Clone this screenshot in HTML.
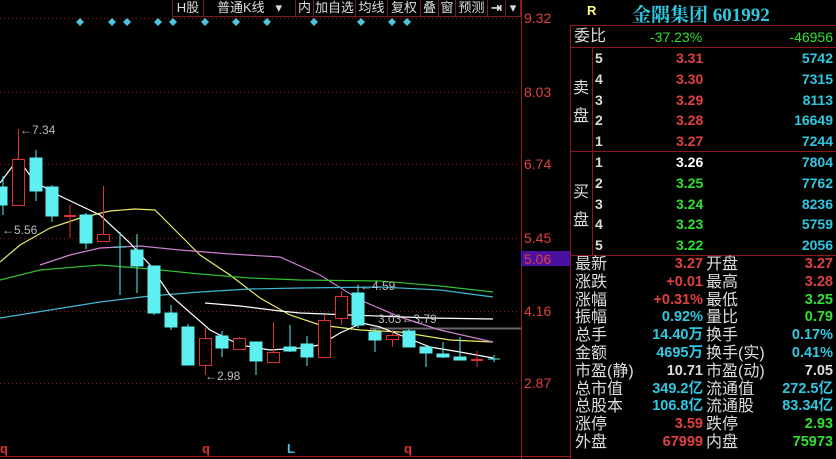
<!DOCTYPE html>
<html><head><meta charset="utf-8"><style>
*{margin:0;padding:0;box-sizing:border-box}
body{width:836px;height:459px;background:#000;overflow:hidden;position:relative;font-family:"Liberation Sans","Noto Sans CJK SC",sans-serif;}
.a{position:absolute;white-space:nowrap}
.tb{position:absolute;top:0;height:17px;border:1px solid #7a1a1a;border-top:none;color:#ddd;font-size:13px;line-height:16px;text-align:center}
.r{position:absolute;font-size:14px;line-height:18px;font-weight:bold;white-space:nowrap}
.lb{position:absolute;font-size:16px;color:#ddd;line-height:18px;white-space:nowrap}
</style></head><body>
<svg class="a" style="left:0;top:0" width="836" height="459">
<g stroke="#8a1a1a" stroke-dasharray="1,3" stroke-width="1">
<line x1="0" y1="18.5" x2="520" y2="18.5"/><line x1="0" y1="92.5" x2="520" y2="92.5"/><line x1="0" y1="164.5" x2="520" y2="164.5"/><line x1="0" y1="238.5" x2="520" y2="238.5"/><line x1="0" y1="311.5" x2="520" y2="311.5"/><line x1="0" y1="383.5" x2="520" y2="383.5"/>
</g>
<line x1="521.5" y1="0" x2="521.5" y2="459" stroke="#a01818"/>
<line x1="0" y1="456.5" x2="570" y2="456.5" stroke="#a01818"/>
<line x1="370" y1="328.5" x2="521" y2="328.5" stroke="#666" stroke-width="2"/>
<rect x="521" y="251" width="49" height="15" fill="#4a10a0"/>
<g fill="#4fc3e0">
<polygon points="80,18 84,22 80,26 76,22"/><polygon points="112,18 116,22 112,26 108,22"/><polygon points="127,18 131,22 127,26 123,22"/><polygon points="158,18 162,22 158,26 154,22"/><polygon points="173,18 177,22 173,26 169,22"/><polygon points="205,18 209,22 205,26 201,22"/><polygon points="236,18 240,22 236,26 232,22"/><polygon points="267,18 271,22 267,26 263,22"/><polygon points="314,18 318,22 314,26 310,22"/><polygon points="361,18 365,22 361,26 357,22"/><polygon points="392,18 396,22 392,26 388,22"/><polygon points="407,18 411,22 407,26 403,22"/>
</g>
<g fill="none" stroke-width="1.2">
<polyline stroke="#e8e86a" points="0,262 20,245 50,228 80,218 110,211 135,209 155,210 175,230 200,255 230,275 260,298 290,315 320,325 360,330 400,332 450,340 493,342"/>
<polyline stroke="#d080d0" points="40,265 70,255 100,248 140,246 180,250 230,254 280,257 320,275 360,300 400,317 440,330 493,342"/>
<polyline stroke="#30c030" points="0,280 40,270 100,265 150,269 200,274 250,278 300,280 380,281 440,286 493,292"/>
<polyline stroke="#40b8d0" points="0,318 50,310 100,302 150,296 200,292 250,289 300,288 380,287 440,290 493,297"/>
<polyline stroke="#fff" points="0,183 18,159 35,182 60,196 100,215 130,243 150,265 170,295 210,330 240,345 270,350 300,348 320,345 340,333 362,323 380,327 400,335 430,347 460,352 493,358"/>
<polyline stroke="#fff" points="205,303 240,306 280,311 300,313 350,315 430,318 493,319"/>
</g>
<g stroke="#5ef0f0" fill="#5ef0f0">
<line x1="3" y1="176" x2="3" y2="215"/><rect x="0" y="187" width="7" height="18"/>
<line x1="36" y1="150" x2="36" y2="201"/><rect x="30" y="158" width="12" height="33"/>
<line x1="52" y1="185" x2="52" y2="222"/><rect x="46" y="187" width="12" height="29"/>
<line x1="86" y1="213" x2="86" y2="249"/><rect x="80" y="215" width="12" height="28"/>
<line x1="120" y1="232" x2="120" y2="295"/><line x1="114" y1="247" x2="126" y2="247"/>
<line x1="137" y1="234" x2="137" y2="293"/><rect x="131" y="250" width="12" height="16"/>
<line x1="154" y1="266" x2="154" y2="315"/><rect x="148" y="266" width="12" height="47"/>
<line x1="171" y1="305" x2="171" y2="330"/><rect x="165" y="313" width="12" height="14"/>
<line x1="188" y1="324" x2="188" y2="365"/><rect x="182" y="327" width="12" height="38"/>
<line x1="222" y1="331" x2="222" y2="357"/><rect x="216" y="336" width="12" height="12"/>
<line x1="256" y1="342" x2="256" y2="375"/><rect x="250" y="342" width="12" height="19"/>
<line x1="290" y1="325" x2="290" y2="352"/><rect x="284" y="347" width="12" height="4"/>
<line x1="307" y1="336" x2="307" y2="366"/><rect x="301" y="344" width="12" height="13"/>
<line x1="358" y1="285" x2="358" y2="328"/><rect x="352" y="293" width="12" height="32"/>
<line x1="375" y1="329" x2="375" y2="352"/><rect x="369" y="332" width="12" height="8"/>
<line x1="409" y1="329" x2="409" y2="347"/><rect x="403" y="331" width="12" height="16"/>
<line x1="426" y1="347" x2="426" y2="367"/><rect x="420" y="347" width="12" height="6"/>
<line x1="443" y1="342" x2="443" y2="358"/><rect x="437" y="354" width="12" height="3"/>
<line x1="460" y1="337" x2="460" y2="360"/><rect x="454" y="357" width="12" height="3"/>
<line x1="494" y1="355" x2="494" y2="362"/><line x1="488" y1="359" x2="500" y2="359"/>
</g>
<g stroke="#e03030" fill="#000">
<line x1="18.5" y1="129" x2="18.5" y2="159"/><rect x="12.5" y="159.5" width="12" height="46"/>
<line x1="70" y1="205" x2="70" y2="238"/><line x1="64" y1="216" x2="76" y2="216" stroke-width="2"/>
<line x1="103.5" y1="186" x2="103.5" y2="234"/><rect x="97.5" y="234.5" width="12" height="7"/>
<line x1="205.5" y1="328" x2="205.5" y2="375"/><rect x="199.5" y="338.5" width="12" height="27"/>
<line x1="239.5" y1="337" x2="239.5" y2="350"/><rect x="233.5" y="338.5" width="12" height="11"/>
<line x1="273.5" y1="322" x2="273.5" y2="352"/><rect x="267.5" y="352.5" width="12" height="10"/>
<line x1="324.5" y1="315" x2="324.5" y2="320"/><rect x="318.5" y="320.5" width="12" height="37"/>
<line x1="341.5" y1="291" x2="341.5" y2="325"/><rect x="335.5" y="296.5" width="12" height="22"/>
<line x1="392.5" y1="330" x2="392.5" y2="347"/><rect x="386.5" y="335.5" width="12" height="4"/>
<line x1="477" y1="351" x2="477" y2="367"/><line x1="471" y1="360" x2="483" y2="360" stroke-width="2"/>
</g>
<g fill="#bbb" font-size="12" font-family="Liberation Sans">
<text x="20" y="134">←7.34</text><text x="2" y="234">←5.56</text><text x="205" y="380">←2.98</text><text x="360" y="290">←4.59</text><text x="378" y="323">3.03←3.79</text>
</g>
<g fill="#e04040" font-size="14" font-family="Liberation Sans">
<text x="524" y="23">9.32</text><text x="524" y="97">8.03</text><text x="524" y="169">6.74</text><text x="524" y="243">5.45</text><text x="524" y="264">5.06</text><text x="524" y="316">4.16</text><text x="524" y="388">2.87</text>
</g>
<g font-size="13" font-weight="bold" font-family="Liberation Sans"><text x="0" y="453" fill="#e03030">q</text><text x="202" y="453" fill="#e03030">q</text><text x="287" y="453" fill="#40c0d0">L</text><text x="404" y="453" fill="#e03030">q</text></g>
<g stroke="#8a1a1a" fill="none">
<line x1="570.5" y1="26" x2="570.5" y2="459"/><line x1="570" y1="25.5" x2="836" y2="25.5"/><line x1="570" y1="47.5" x2="836" y2="47.5"/><line x1="570" y1="151.5" x2="836" y2="151.5"/><line x1="570" y1="255.5" x2="836" y2="255.5"/><line x1="592.5" y1="47" x2="592.5" y2="255"/>
</g>
</svg>
<div class="tb" style="left:172px;width:32px">H股</div>
<div class="tb" style="left:203px;width:93px">普通K线 &nbsp;&nbsp;▾</div>
<div class="tb" style="left:295px;width:19px">内</div>
<div class="tb" style="left:313px;width:43px">加自选</div>
<div class="tb" style="left:355px;width:33px">均线</div>
<div class="tb" style="left:387px;width:34px">复权</div>
<div class="tb" style="left:420px;width:19px">叠</div>
<div class="tb" style="left:438px;width:18px">窗</div>
<div class="tb" style="left:455px;width:33px">预测</div>
<div class="tb" style="left:487px;width:19px;font-weight:bold">⇥</div>
<div class="tb" style="left:505px;width:16px">▾</div>
<div class="a" style="left:587px;top:3px;color:#ffff80;font-size:13px;font-weight:bold">R</div>
<div class="a" style="left:632px;top:0;color:#30c8e0;font-size:19px;font-weight:bold;font-family:'Liberation Serif','Noto Serif CJK SC',serif">金隅集团 601992</div>
<div class="lb" style="left:574px;top:28px">委比</div>
<div class="r" style="left:650px;top:28px;color:#30e030;font-weight:normal">-37.23%</div>
<div class="r" style="right:3px;top:28px;color:#30e030;font-weight:normal">-46956</div>
<div class="lb" style="left:573px;top:75px;line-height:28px">卖<br>盘</div>
<div class="lb" style="left:573px;top:179px;line-height:28px">买<br>盘</div>
<div class="a" style="left:595px;top:48px;color:#ddd;font-size:14px;font-weight:bold;line-height:20.8px">5<br>4<br>3<br>2<br>1<br>1<br>2<br>3<br>4<br>5</div>
<div class="a" style="left:676px;top:48px;font-size:14px;font-weight:bold;line-height:20.8px;color:#e04040">3.31<br>3.30<br>3.29<br>3.28<br>3.27<br><span style="color:#fff">3.26</span><br><span style="color:#30e030">3.25<br>3.24<br>3.23<br>3.22</span></div>
<div class="a" style="right:3px;top:48px;font-size:14px;font-weight:bold;line-height:20.8px;color:#30c8e0;text-align:right">5742<br>7315<br>8113<br>16649<br>7244<br>7804<br>7762<br>8236<br>5759<br>2056</div>
<div class="a" style="left:575px;top:256px;font-size:16px;color:#ddd;line-height:17.8px">最新<br>涨跌<br>涨幅<br>振幅<br>总手<br>金额<br>市盈(静)<br>总市值<br>总股本<br>涨停<br>外盘</div>
<div class="a" style="left:706px;top:256px;font-size:16px;color:#ddd;line-height:17.8px">开盘<br>最高<br>最低<br>量比<br>换手<br>换手(实)<br>市盈(动)<br>流通值<br>流通股<br>跌停<br>内盘</div>
<div class="a" style="right:133px;top:256px;font-size:14.5px;font-weight:bold;line-height:17.8px;text-align:right"><span style="color:#e04040">3.27<br>+0.01<br>+0.31%</span><br><span style="color:#30c8e0">0.92%<br>14.40万<br>4695万</span><br><span style="color:#ddd">10.71</span><br><span style="color:#30c8e0">349.2亿<br>106.8亿</span><br><span style="color:#e04040">3.59<br>67999</span></div>
<div class="a" style="right:3px;top:256px;font-size:14.5px;font-weight:bold;line-height:17.8px;text-align:right"><span style="color:#e04040">3.27<br>3.28</span><br><span style="color:#30e030">3.25<br>0.79</span><br><span style="color:#30c8e0">0.17%<br>0.41%</span><br><span style="color:#ddd">7.05</span><br><span style="color:#30c8e0">272.5亿<br>83.34亿</span><br><span style="color:#30e030">2.93<br>75973</span></div>
</body></html>
